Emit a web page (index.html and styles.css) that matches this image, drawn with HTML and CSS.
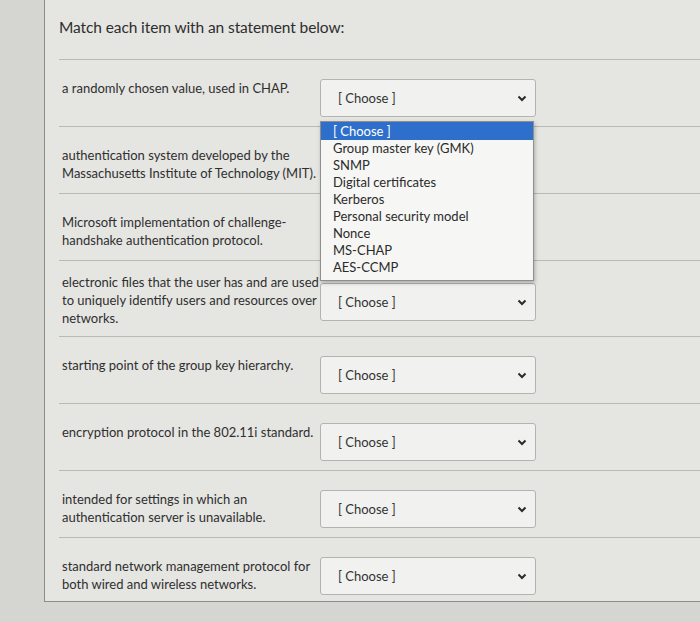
FILE: index.html
```html
<!DOCTYPE html>
<html lang="en">
<head>
  <meta charset="UTF-8">
  <meta name="viewport" content="width=device-width, initial-scale=1.0">
  <title>Matching Question</title>
  <link rel="stylesheet" href="styles.css">
</head>
<body>
  <div class="quiz">
    <h2 class="quiz-title">Match each item with an statement below:</h2>

    <div class="match">
      <div class="match-text">a randomly chosen value, used in CHAP.</div>
      <div class="match-select">
        <div class="select-box"><span>[ Choose ]</span><svg width="10" height="7" viewBox="0 0 10 7"><path d="M1.5 1.5 L5 5 L8.5 1.5" fill="none" stroke="#2b2b2b" stroke-width="2"/></svg></div>
        <ul class="select-menu">
          <li class="active">[ Choose ]</li>
          <li>Group master key (GMK)</li>
          <li>SNMP</li>
          <li>Digital certificates</li>
          <li>Kerberos</li>
          <li>Personal security model</li>
          <li>Nonce</li>
          <li>MS-CHAP</li>
          <li>AES-CCMP</li>
        </ul>
      </div>
    </div>

    <!-- these two selects sit under the open menu -->
    <div class="match">
      <div class="match-text">authentication system developed by the Massachusetts Institute of Technology (MIT).</div>
      <div class="match-select">
        <div class="select-box covered"></div>
      </div>
    </div>

    <div class="match">
      <div class="match-text">Microsoft implementation of challenge-handshake authentication protocol.</div>
      <div class="match-select">
        <div class="select-box covered"></div>
      </div>
    </div>

    <div class="match match-tall">
      <div class="match-text">electronic files that the user has and are used to uniquely identify users and resources over networks.</div>
      <div class="match-select">
        <div class="select-box"><span>[ Choose ]</span><svg width="10" height="7" viewBox="0 0 10 7"><path d="M1.5 1.5 L5 5 L8.5 1.5" fill="none" stroke="#2b2b2b" stroke-width="2"/></svg></div>
      </div>
    </div>

    <div class="match">
      <div class="match-text">starting point of the group key hierarchy.</div>
      <div class="match-select">
        <div class="select-box"><span>[ Choose ]</span><svg width="10" height="7" viewBox="0 0 10 7"><path d="M1.5 1.5 L5 5 L8.5 1.5" fill="none" stroke="#2b2b2b" stroke-width="2"/></svg></div>
      </div>
    </div>

    <div class="match">
      <div class="match-text">encryption protocol in the 802.11i standard.</div>
      <div class="match-select">
        <div class="select-box"><span>[ Choose ]</span><svg width="10" height="7" viewBox="0 0 10 7"><path d="M1.5 1.5 L5 5 L8.5 1.5" fill="none" stroke="#2b2b2b" stroke-width="2"/></svg></div>
      </div>
    </div>

    <div class="match">
      <div class="match-text">intended for settings in which an authentication server is unavailable.</div>
      <div class="match-select">
        <div class="select-box"><span>[ Choose ]</span><svg width="10" height="7" viewBox="0 0 10 7"><path d="M1.5 1.5 L5 5 L8.5 1.5" fill="none" stroke="#2b2b2b" stroke-width="2"/></svg></div>
      </div>
    </div>

    <div class="match match-last">
      <div class="match-text">standard network management protocol for both wired and wireless networks.</div>
      <div class="match-select">
        <div class="select-box"><span>[ Choose ]</span><svg width="10" height="7" viewBox="0 0 10 7"><path d="M1.5 1.5 L5 5 L8.5 1.5" fill="none" stroke="#2b2b2b" stroke-width="2"/></svg></div>
      </div>
    </div>
  </div>
</body>
</html>
```

FILE: styles.css
```css
html, body {
  margin: 0;
  padding: 0;
  height: 100%;
  box-sizing: border-box;
  background-color: #d5d5d2;
  color: #333;
  font-family: Lato, "Open Sans", sans-serif;
}
*, *:before, *:after { box-sizing: inherit; }

.quiz {
  margin-left: 44px;
  height: 602px;
  overflow: hidden;
  background-color: #e5e5e2;
  border-left: 1px solid #8c8c8a;
  border-bottom: 1px solid #8c8c8a;
  padding-left: 14px;
}

.quiz-title {
  margin: 0;
  height: 60px;
  padding-top: 18px;
  font-size: 15.5px;
  font-weight: 400;
  letter-spacing: -0.1px;
  color: #2e2e2e;
  border-bottom: 1px solid #b9b9b6;
}

.match {
  display: flex;
  align-items: flex-start;
  padding: 19px 0 9px 3px;
  border-bottom: 1px solid #b9b9b6;
}
.match-tall { padding: 12px 0 9px 3px; }
.match-tall .match-select { margin-top: 10px; }
.match-last { border-bottom: none; }

.match-text {
  flex: 0 0 258px;
  font-size: 13px;
  line-height: 18px;
  color: #2f2f2f;
}

.match-select {
  position: relative;
  width: 216px;
}

.select-box {
  height: 38px;
  display: flex;
  align-items: center;
  justify-content: space-between;
  padding: 0 8px 0 17px;
  background-color: #f1f1ef;
  border: 1px solid #b3b3b0;
  border-radius: 3px;
  font-size: 13px;
  color: #333;
}
.select-box.covered { visibility: hidden; }

.select-menu {
  position: absolute;
  top: 42px;
  left: 0;
  width: 214px;
  margin: 0;
  padding: 0 0 4px;
  list-style: none;
  background-color: #f6f6f4;
  border: 1px solid #8e8e8c;
  box-shadow: 1px 2px 4px rgba(0, 0, 0, 0.25);
  z-index: 2;
  font-size: 13px;
  line-height: 17px;
  color: #2b2b2b;
}
.select-menu li { padding: 0 12px; }
.select-menu li.active {
  background-color: #2e6fcc;
  color: #fff;
  padding-top: 1px;
}
```
